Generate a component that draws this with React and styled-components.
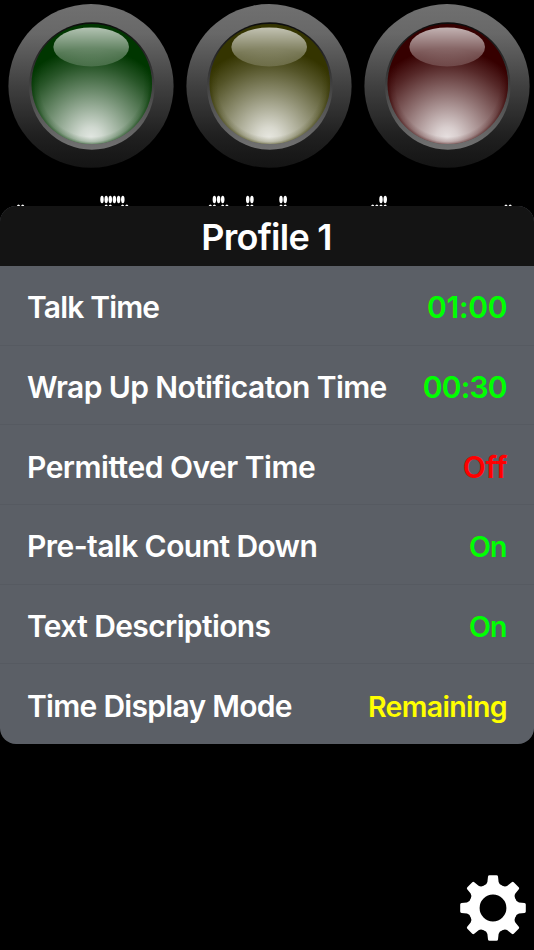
import React from 'react';
import styled, { createGlobalStyle } from 'styled-components';

const GlobalStyle = createGlobalStyle`
  html, body {
    margin: 0;
    background: #000;
  }
`;

const Screen = styled.div`
  display: flex;
  flex-direction: column;
  width: 534px;
  height: 950px;
  overflow: hidden;
  background: #000;
  font-family: Inter, "Liberation Sans", sans-serif;
`;

const Lights = styled.div`
  display: grid;
  grid-template-columns: repeat(3, 178px);
  height: 175px;
`;

const LampSvg = styled.svg`
  display: block;
  width: 178px;
  height: 175px;
`;

const DotDisplay = styled.svg`
  display: block;
  flex: none;
  width: 534px;
  height: 31px;
  fill: #fff;
`;

const Panel = styled.section`
  flex: none;
  height: 538px;
  border-radius: 16px;
  overflow: hidden;
  background: #5b5f66;
`;

const PanelHeader = styled.header`
  display: flex;
  justify-content: center;
  align-items: center;
  height: 60px;
  background: #141414;
`;

const Title = styled.h1`
  margin: 1px 1px 0 0;
  color: #fff;
  font-size: 36px;
  font-weight: 600;
  line-height: 44px;
  letter-spacing: -0.75px;
`;

const Rows = styled.div`
  display: grid;
  grid-template-rows: repeat(6, 1fr);
  height: 478px;
`;

const Row = styled.div`
  display: flex;
  justify-content: space-between;
  align-items: center;
  padding: 3px 26.5px 0 27px;
  box-shadow: inset 0 -1px 0 #565a61;
  white-space: nowrap;

  &:last-child {
    box-shadow: none;
  }
`;

const Label = styled.span`
  color: #fff;
  font-size: 30px;
  font-weight: 600;
  line-height: 36px;
  letter-spacing: ${({ $spacing }) => $spacing}px;
`;

const Value = styled.span`
  color: ${({ $color }) => $color};
  font-size: ${({ $size }) => $size}px;
  font-weight: 600;
  line-height: 36px;
  letter-spacing: ${({ $spacing }) => $spacing}px;
  margin-right: ${({ $spacing }) => -$spacing}px;
  padding-top: ${({ $size }) => ($size < 30 ? 2 : 0)}px;
`;

const Footer = styled.footer`
  display: flex;
  flex: 1;
  justify-content: flex-end;
  align-items: flex-end;
  padding: 0 8px 9px 0;
`;

const SettingsButton = styled.button`
  display: block;
  width: 66px;
  height: 66px;
  padding: 0;
  border: 0;
  background: none;

  svg {
    display: block;
  }
`;

const lamps = [
  { id: 'green', dark: '#003600', light: '#e2e7e2' },
  { id: 'yellow', dark: '#343400', light: '#e7e7e0' },
  { id: 'red', dark: '#360000', light: '#e7e0e0' },
];

const settings = [
  { label: 'Talk Time', value: '01:00', color: '#0f0', size: 30, spacing: -0.83, valueSpacing: -0.3 },
  { label: 'Wrap Up Notificaton Time', value: '00:30', color: '#0f0', size: 30, spacing: -0.6, valueSpacing: -0.8 },
  { label: 'Permitted Over Time', value: 'Off', color: '#f00', size: 30, spacing: -0.5, valueSpacing: -0.2 },
  { label: 'Pre-talk Count Down', value: 'On', color: '#0f0', size: 28.5, spacing: -0.57, valueSpacing: -0.8 },
  { label: 'Text Descriptions', value: 'On', color: '#0f0', size: 28.5, spacing: -0.62, valueSpacing: -0.8 },
  { label: 'Time Display Mode', value: 'Remaining', color: '#ff0', size: 28.5, spacing: -0.71, valueSpacing: -0.65 },
];

// tops of the dot matrix characters, the rest is under the panel
const tallDots = [102, 106.2, 110.3, 114.4, 118.6, 122.8, 214.4, 218.6, 222.7, 247.7, 251.9, 281, 285.2, 381, 385.2];
const smallDots = [18.5, 22.7, 106.2, 110.3, 122.6, 126.8, 210.3, 214.4, 222.7, 226.9, 247.7, 251.9, 281, 285.2, 372.7, 376.8, 381, 385.2, 506, 510.2];

const Lamp = ({ id, dark, light }) => (
  <LampSvg viewBox="0 0 178 175">
    <defs>
      <linearGradient id={`${id}-ring`} x1="0" y1="0" x2="0" y2="1">
        <stop offset="0" stopColor="#707070" />
        <stop offset="0.18" stopColor="#686868" />
        <stop offset="0.5" stopColor="#404040" />
        <stop offset="0.8" stopColor="#202020" />
        <stop offset="1" stopColor="#141414" />
      </linearGradient>
      <linearGradient id={`${id}-bezel`} x1="0" y1="0" x2="0" y2="1">
        <stop offset="0" stopColor="#0c0c0c" />
        <stop offset="0.25" stopColor="#262626" />
        <stop offset="0.6" stopColor="#4c4c4c" />
        <stop offset="1" stopColor="#727272" />
      </linearGradient>
      <radialGradient id={`${id}-glow`} gradientUnits="userSpaceOnUse" cx="91" cy="138" r="90">
        <stop offset="0" stopColor={light} />
        <stop offset="0.12" stopColor={light} stopOpacity="0.92" />
        <stop offset="0.5" stopColor={light} stopOpacity="0.5" />
        <stop offset="0.8" stopColor={light} stopOpacity="0.18" />
        <stop offset="1" stopColor={light} stopOpacity="0" />
      </radialGradient>
      <radialGradient id={`${id}-edge`} cx="0.5" cy="0.51">
        <stop offset="0.86" stopColor={dark} stopOpacity="0" />
        <stop offset="0.94" stopColor={dark} stopOpacity="0.2" />
        <stop offset="1" stopColor={dark} stopOpacity="0.6" />
      </radialGradient>
      <linearGradient id={`${id}-shine`} x1="0" y1="0" x2="0" y2="1">
        <stop offset="0" stopColor="#fff" stopOpacity="0.7" />
        <stop offset="1" stopColor="#fff" stopOpacity="0.15" />
      </linearGradient>
    </defs>
    <ellipse cx="91" cy="85.9" rx="82.6" ry="81.8" fill={`url(#${id}-ring)`} />
    <ellipse cx="91.8" cy="86" rx="62.8" ry="63.7" fill={`url(#${id}-bezel)`} />
    <ellipse cx="91.8" cy="84" rx="60.2" ry="60" fill={dark} />
    <ellipse cx="91.8" cy="84" rx="60.2" ry="60" fill={`url(#${id}-glow)`} />
    <ellipse cx="91.8" cy="84" rx="60.2" ry="60" fill={`url(#${id}-edge)`} />
    <ellipse cx="91.2" cy="47" rx="37.8" ry="19.4" fill={`url(#${id}-shine)`} />
  </LampSvg>
);

const GearIcon = () => (
  <svg width="66" height="66" viewBox="-33 -33 66 66" fill="#fff">
    <circle r="18.7" fill="none" stroke="#fff" strokeWidth="10.6" />
    {[0, 45, 90, 135, 180, 225, 270, 315].map(angle => (
      <path
        key={angle}
        transform={`rotate(${angle})`}
        d="M-9.5-22 Q-6-23.5-5.6-26 L-5-31.5 Q-4.8-32.8-3.5-32.8 H3.5 Q4.8-32.8 5-31.5 L5.6-26 Q6-23.5 9.5-22 L6-18 H-6 Z"
      />
    ))}
  </svg>
);

const App = () => (
  <>
    <GlobalStyle />
    <Screen>
      <Lights>
        {lamps.map(lamp => <Lamp key={lamp.id} {...lamp} />)}
      </Lights>
      <DotDisplay viewBox="0 175 534 31">
        {tallDots.map(x => <ellipse key={x} cx={x} cy="199.5" rx="1.75" ry="3.7" />)}
        {smallDots.map(x => <ellipse key={x} cx={x} cy="207.7" rx="1.75" ry="3.2" />)}
      </DotDisplay>
      <Panel>
        <PanelHeader>
          <Title>Profile 1</Title>
        </PanelHeader>
        <Rows>
          {settings.map(item => (
            <Row key={item.label}>
              <Label $spacing={item.spacing}>{item.label}</Label>
              <Value $color={item.color} $size={item.size} $spacing={item.valueSpacing}>{item.value}</Value>
            </Row>
          ))}
        </Rows>
      </Panel>
      <Footer>
        <SettingsButton aria-label="Settings">
          <GearIcon />
        </SettingsButton>
      </Footer>
    </Screen>
  </>
);

export default App;
